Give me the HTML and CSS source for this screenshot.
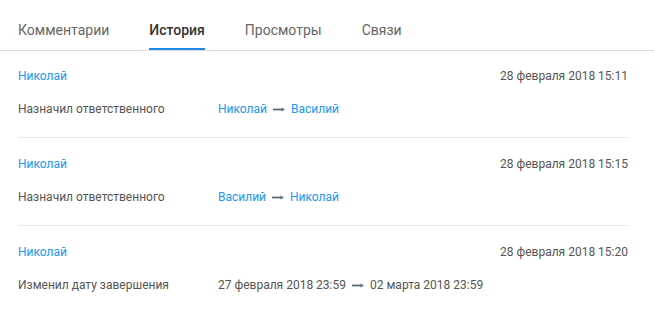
FILE: index.html
```html
<!DOCTYPE html>
<html lang="ru">
<head>
  <meta charset="UTF-8" />
  <title>История</title>
  <link rel="stylesheet" href="styles.css">
</head>
<body>
  <div class="tabs">
    <div class="tab">Комментарии</div>
    <div class="tab active">История</div>
    <div class="tab">Просмотры</div>
    <div class="tab">Связи</div>
  </div>

  <div class="history">
    <div class="entry">
      <div class="entry-head">
        <a class="user" href="#">Николай</a>
        <span class="date">28 февраля 2018 15:11</span>
      </div>
      <div class="entry-body">
        <span class="action">Назначил ответственного</span>
        <span class="change">
          <a class="user" href="#">Николай</a>
          <svg class="arrow" width="12" height="5" viewBox="0 0 12 5"><path d="M0 2.5H9" stroke="#546e7a" stroke-width="1.8"/><path d="M8.5 0.5L12 2.5L8.5 4.5Z" fill="#546e7a"/></svg>
          <a class="user" href="#">Василий</a>
        </span>
      </div>
    </div>

    <div class="entry">
      <div class="entry-head">
        <a class="user" href="#">Николай</a>
        <span class="date">28 февраля 2018 15:15</span>
      </div>
      <div class="entry-body">
        <span class="action">Назначил ответственного</span>
        <span class="change">
          <a class="user" href="#">Василий</a>
          <svg class="arrow" width="12" height="5" viewBox="0 0 12 5"><path d="M0 2.5H9" stroke="#546e7a" stroke-width="1.8"/><path d="M8.5 0.5L12 2.5L8.5 4.5Z" fill="#546e7a"/></svg>
          <a class="user" href="#">Николай</a>
        </span>
      </div>
    </div>

    <div class="entry">
      <div class="entry-head">
        <a class="user" href="#">Николай</a>
        <span class="date">28 февраля 2018 15:20</span>
      </div>
      <div class="entry-body">
        <span class="action">Изменил дату завершения</span>
        <span class="change">
          <span>27 февраля 2018 23:59</span>
          <svg class="arrow" width="12" height="5" viewBox="0 0 12 5"><path d="M0 2.5H9" stroke="#546e7a" stroke-width="1.8"/><path d="M8.5 0.5L12 2.5L8.5 4.5Z" fill="#546e7a"/></svg>
          <span>02 марта 2018 23:59</span>
        </span>
      </div>
    </div>
  </div>
</body>
</html>
```

FILE: styles.css
```css
* {
  margin: 0;
  padding: 0;
  box-sizing: border-box;
}

body {
  font-family: Roboto, "Liberation Sans", sans-serif;
  color: #555;
  background: #fff;
}

/* Tabs */
.tabs {
  display: flex;
  gap: 40px;
  padding: 0 18px;
  height: 51px;
  border-bottom: 1px solid #ddd;
}

.tab {
  font-size: 14px;
  line-height: 20px;
  padding-top: 20px;
  color: #666;
  border-bottom: 2px solid transparent;
}

.tab.active {
  color: #333;
  font-weight: 500;
  border-bottom-color: #1e88e5;
}

/* History list */
.history {
  padding: 0 26px 0 18px;
}

.entry {
  padding: 18px 0 20px;
  border-bottom: 1px solid #e8e8e8;
}

.entry:first-child {
  padding-top: 17px;
}

.entry:last-child {
  border-bottom: none;
}

.entry-head {
  display: flex;
  justify-content: space-between;
  font-size: 12px;
  line-height: 16px;
}

.entry-body {
  display: flex;
  font-size: 12px;
  line-height: 16px;
  margin-top: 17px;
}

.action {
  width: 200px;
}

.change {
  display: flex;
  align-items: center;
  gap: 6px;
}

.user {
  color: #2196f3;
  text-decoration: none;
}

.date {
  color: #555;
}

.arrow {
  display: block;
}
```
